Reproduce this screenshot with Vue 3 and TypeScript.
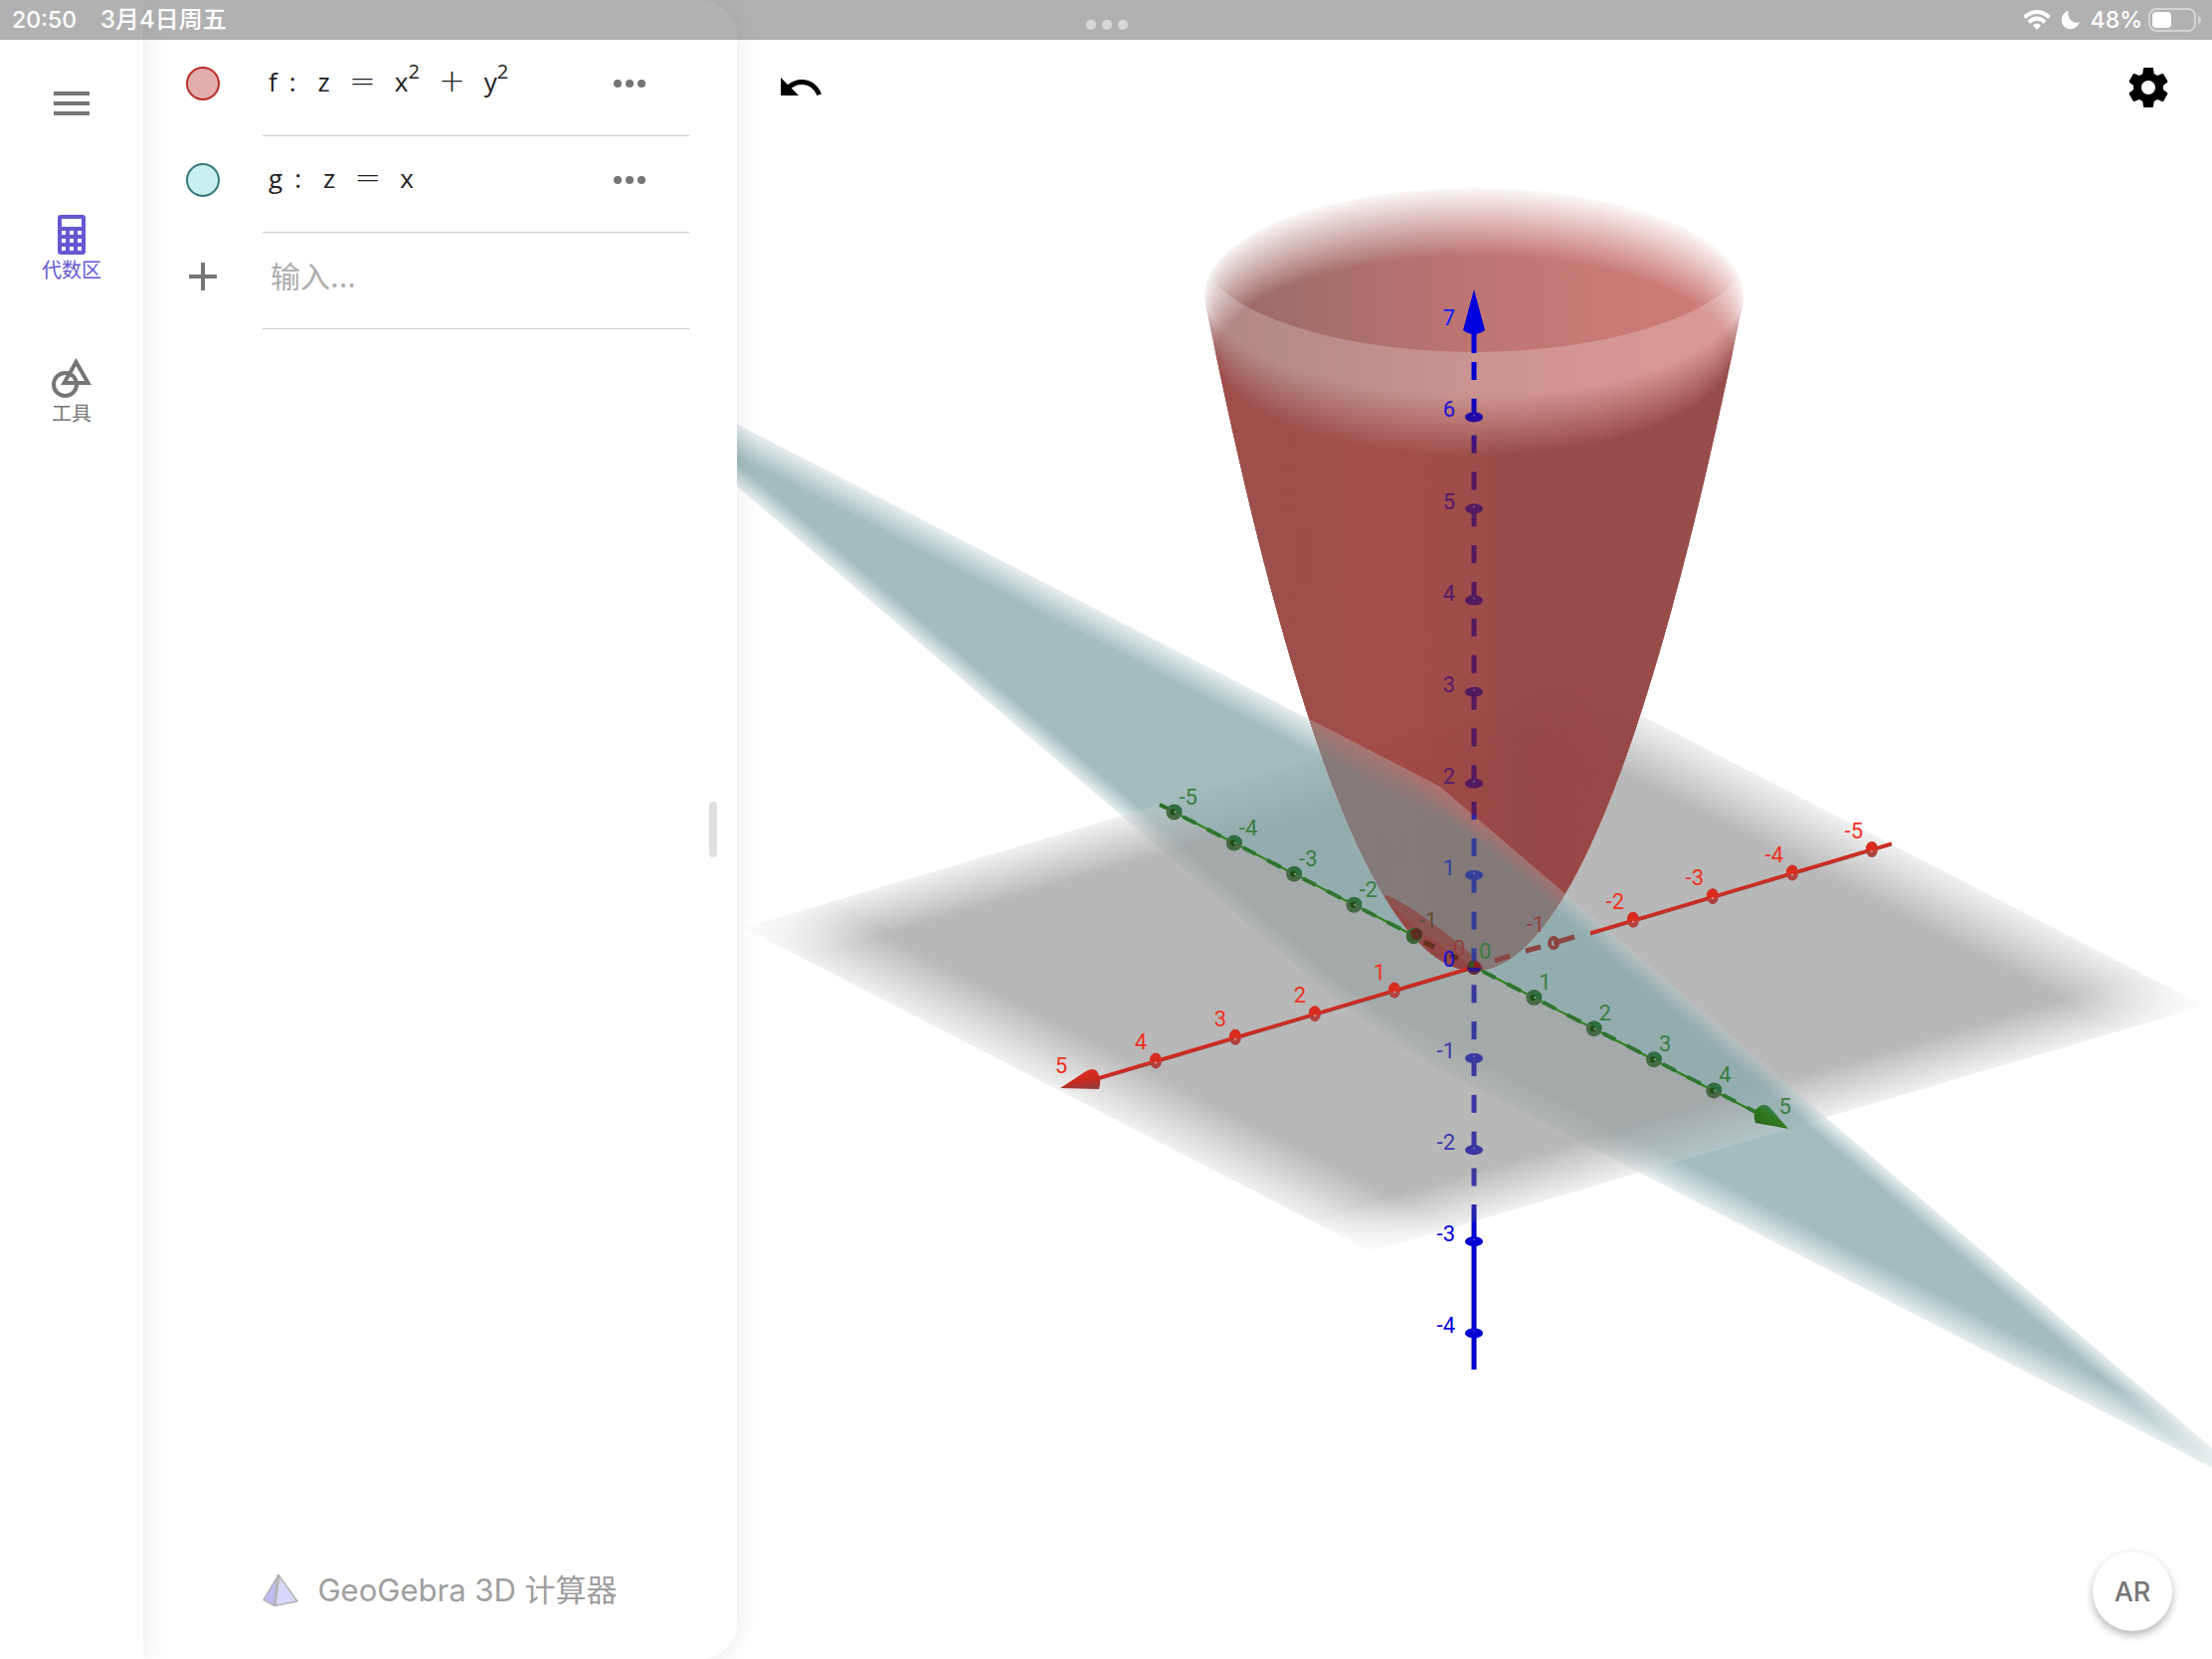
<script setup lang="ts">
type Point = [number, number]
interface Label { text: string; x: number; y: number; color: string; anchor: 'start' | 'end' }
interface Segment { a: Point; b: Point }

// Orthographic projection of the 3D scene onto the drawing area
const origin: Point = [1482, 972]
const unitX: Point = [-80, 23.6]
const unitY: Point = [60.3, 31.1]
const unitZ = 92.1

function project(x: number, y: number, z: number): Point {
  return [
    origin[0] + unitX[0] * x + unitY[0] * y,
    origin[1] + unitX[1] * x + unitY[1] * y - unitZ * z,
  ]
}

const groundMatrix = `matrix(${unitX[0]} ${unitX[1]} ${unitY[0]} ${unitY[1]} ${origin[0]} ${origin[1]})`
const slopeMatrix = `matrix(${unitX[0]} ${unitX[1] - unitZ} ${unitY[0]} ${unitY[1]} ${origin[0]} ${origin[1]})`

// Paraboloid: level curves are ellipses, the outline is a parabola
const radiusX = 100
const radiusY = 39
const curve = unitZ / (radiusX * radiusX)

function outlineY(dx: number): number {
  return origin[1] + 4 - curve * dx * dx
}
const rimHalf = 271
const rimY = outlineY(rimHalf)
const rimCenter = origin[1] - unitZ * 7.33
const bodyPath =
  `M${origin[0] - rimHalf} ${rimY} Q${origin[0]} ${rimY + 2 * curve * rimHalf * rimHalf} ${origin[0] + rimHalf} ${rimY}` +
  ` V${rimCenter} A${rimHalf} 108 0 0 0 ${origin[0] - rimHalf} ${rimCenter} Z`

function levelPath(z: number, back: boolean): string {
  const r = Math.sqrt(z)
  const cy = origin[1] - unitZ * z
  const left = origin[0] - radiusX * r
  const right = origin[0] + radiusX * r
  return `M${left - 30} ${cy} H${left} A${radiusX * r} ${radiusY * r} 0 0 ${back ? 1 : 0} ${right} ${cy} H${right + 30} V1000 H${left - 30} Z`
}

function fadeLayers(back: boolean, full: number) {
  const count = 28
  return Array.from({ length: count }, (_, i) => {
    const before = (full * i) / count
    const after = (full * (i + 1)) / count
    return {
      d: levelPath(7.38 - (0.7 * i) / (count - 1), back),
      opacity: (after - before) / (1 - before),
    }
  })
}
const backLayers = fadeLayers(true, 1)
const frontLayers = fadeLayers(false, 0.78)
const openingPath = levelPath(7.9, false)

// Circle in which the plane cuts the paraboloid
const cutPoints = Array.from({ length: 60 }, (_, i) => {
  const t = (i / 60) * Math.PI * 2
  const x = 0.5 + 0.5 * Math.cos(t)
  return project(x, 0.5 * Math.sin(t), x).join(',')
}).join(' ')
const lensPath =
  `M${origin[0] - 90} ${outlineY(-90)} Q${origin[0] - 41} ${origin[1] + 4 + curve * 90 * 8} ${origin[0] + 8} ${outlineY(8)} Z`

const zDashes: Segment[] = Array.from({ length: 23 }, (_, i) => {
  const y = 364 + i * unitZ * 0.4
  return { a: [origin[0], y], b: [origin[0], y + 18] }
})

const yDashes: Segment[] = []
for (let n = -5; n < 5; n++) {
  if (n === -1) continue
  for (const [from, to] of [[0.15, 0.36], [0.55, 0.78]]) {
    yDashes.push({ a: project(0, n + from, 0), b: project(0, n + to, 0) })
  }
}

function range(from: number, to: number): number[] {
  return Array.from({ length: to - from + 1 }, (_, i) => from + i)
}
const xTicks = range(-5, 4).filter((n) => n !== 0 && n !== -1).map((n) => project(n, 0, 0))
const yTicks = range(-5, 4).filter((n) => n !== 0).map((n) => project(0, n, 0))
const zTicks = range(-4, 6).filter((n) => n !== 0).map((n) => project(0, 0, n))

function zColor(n: number): string {
  if (n === 7) return '#0a1eff'
  if (n === 6) return '#1c14cf'
  if (n >= 2) return '#571a68'
  if (n === 1) return '#33409a'
  if (n === 0) return '#1410d8'
  return n >= -2 ? '#3838a8' : '#0000e0'
}

const labels: Label[] = [
  ...range(-5, 5).map((n): Label => {
    const [x, y] = project(n, 0, 0)
    return { text: String(n), x: x - 9, y: y - 11, color: n === -1 || n === 0 ? '#923f3c' : '#f0301f', anchor: 'end' }
  }),
  ...range(-5, 5).map((n): Label => {
    const [x, y] = project(0, n, 0)
    return { text: String(n), x: x + 5, y: y - 8, color: n === -1 ? '#5c5038' : '#3a7d42', anchor: 'start' }
  }),
  ...range(-4, 7).map((n): Label => {
    const [x, y] = project(0, 0, n)
    return { text: String(n), x: x - 19, y, color: zColor(n), anchor: 'end' }
  }),
]
</script>

<template>
  <div class="app">
    <header class="status">
      <div class="status-left"><span>20:50</span><span class="date">3月4日周五</span></div>
      <div class="status-dots"><i></i><i></i><i></i></div>
      <div class="status-right">
        <svg width="28" height="20" viewBox="0 0 28 20" fill="none" stroke="#fff" stroke-width="4">
          <path d="M1.500 7.500Q14-3.500 26.500 7.500" />
          <path d="M6 12.200Q14 5 22 12.200" />
          <path d="M9.800 15.600Q14 11.400 18.200 15.600L14 20Z" fill="#fff" stroke="none" />
        </svg>
        <svg class="moon" width="20" height="20" viewBox="0 0 20 20">
          <path d="M7.500.500C6 7.500 11 14.500 19 12.300C17 17 13.500 19.300 9.800 19.300C4.500 19.300.800 15.300.800 10.300C.800 6 3.500 2 7.500.500Z" fill="#fff" />
        </svg>
        <span>48%</span>
        <svg width="54" height="24" viewBox="0 0 54 24">
          <rect x="1" y="1" width="46" height="22" rx="7" fill="none" stroke="#d4d4d4" stroke-width="2" />
          <rect x="4" y="4" width="19" height="16" rx="4" fill="#fff" />
          <path d="M50 8Q53 9 53 12T50 16Z" fill="#d4d4d4" />
        </svg>
      </div>
    </header>

    <nav class="rail">
      <button class="menu" aria-label="菜单"><i></i><i></i><i></i></button>
      <button class="tab active">
        <svg width="28" height="40" viewBox="0 0 28 40">
          <path
            fill="currentColor" fill-rule="evenodd"
            d="M3 0H25Q28 0 28 3V37Q28 40 25 40H3Q0 40 0 37V3Q0 0 3 0ZM4 4V12H24V4ZM4 16V20H8V16ZM12 16V20H16V16ZM20 16V20H24V16ZM4 24V28H8V24ZM12 24V28H16V24ZM20 24V28H24V24ZM4 32V36H8V32ZM12 32V36H16V32ZM20 32V36H24V32Z"
          />
        </svg>
        <span>代数区</span>
      </button>
      <button class="tab">
        <svg width="40" height="40" viewBox="0 0 40 40" fill="none" stroke="currentColor" stroke-width="4">
          <circle cx="13.500" cy="26.500" r="11.500" />
          <path d="M24.500 4L36.500 25H12.500Z" />
        </svg>
        <span>工具</span>
      </button>
    </nav>

    <section class="algebra">
      <div class="rows">
        <div class="row">
          <button class="marble red" aria-label="f"></button>
          <div class="cell">
            <div class="formula">
              <span class="name">f</span><span class="colon">:</span><span>z</span><span class="op">=</span><span>x<sup>2</sup></span><span class="op">+</span><span>y<sup>2</sup></span>
            </div>
            <button class="more" aria-label="更多"><i></i><i></i><i></i></button>
          </div>
        </div>
        <div class="row">
          <button class="marble teal" aria-label="g"></button>
          <div class="cell">
            <div class="formula">
              <span class="name">g</span><span class="colon">:</span><span>z</span><span class="op">=</span><span>x</span>
            </div>
            <button class="more" aria-label="更多"><i></i><i></i><i></i></button>
          </div>
        </div>
        <div class="row">
          <button class="plus" aria-label="添加">
            <svg width="28" height="28" viewBox="0 0 28 28"><path d="M12 0H16V12H28V16H16V28H12V16H0V12H12Z" fill="#757575" /></svg>
          </button>
          <div class="cell">
            <input class="entry" type="text" placeholder="输入..." aria-label="输入" />
          </div>
        </div>
      </div>
      <div class="sash"></div>
      <footer class="brand">
        <svg width="37" height="34" viewBox="0 0 37 34" stroke="#b4b4b4" stroke-width="1.500" stroke-linejoin="round">
          <path d="M16 1.500L1 26.500L12 32.500Z" fill="#bcbcf6" />
          <path d="M16 1.500L12 32.500L35 28Z" fill="#d8d8fa" />
          <path d="M16 1.500L12 32.500" stroke-width="3" />
        </svg>
        <span>GeoGebra 3D 计算器</span>
      </footer>
    </section>

    <main class="stage">
      <svg class="scene" viewBox="741 0 1483 1668" preserveAspectRatio="xMidYMid slice">
        <defs>
          <linearGradient id="fade-ground-u">
            <stop offset="0" stop-color="#fff" stop-opacity="0.2" /><stop offset="0.1" stop-color="#fff" />
            <stop offset="0.9" stop-color="#fff" /><stop offset="1" stop-color="#fff" stop-opacity="0.2" />
          </linearGradient>
          <linearGradient id="fade-ground-v" x2="0" y2="1">
            <stop offset="0" stop-color="#fff" stop-opacity="0.2" /><stop offset="0.1" stop-color="#fff" />
            <stop offset="0.9" stop-color="#fff" /><stop offset="1" stop-color="#fff" stop-opacity="0.2" />
          </linearGradient>
          <linearGradient id="fade-slope-u">
            <stop offset="0" stop-color="#fff" stop-opacity="0.25" /><stop offset="0.115" stop-color="#fff" />
            <stop offset="0.885" stop-color="#fff" /><stop offset="1" stop-color="#fff" stop-opacity="0.25" />
          </linearGradient>
          <linearGradient id="fade-slope-v" x2="0" y2="1">
            <stop offset="0" stop-color="#fff" stop-opacity="0.25" /><stop offset="0.08" stop-color="#fff" />
            <stop offset="0.92" stop-color="#fff" /><stop offset="1" stop-color="#fff" stop-opacity="0.25" />
          </linearGradient>
          <mask id="ground-u" maskUnits="userSpaceOnUse" x="-6" y="-6" width="12" height="12">
            <rect x="-5.240" y="-5.240" width="10.480" height="10.480" fill="url(#fade-ground-u)" />
          </mask>
          <mask id="ground-v" maskUnits="userSpaceOnUse" x="-6" y="-6" width="12" height="12">
            <rect x="-5.240" y="-5.240" width="10.480" height="10.480" fill="url(#fade-ground-v)" />
          </mask>
          <mask id="slope-u" maskUnits="userSpaceOnUse" x="-8" y="-8" width="16" height="16">
            <rect x="-4.450" y="-7.400" width="10.460" height="14.800" fill="url(#fade-slope-u)" />
          </mask>
          <mask id="slope-v" maskUnits="userSpaceOnUse" x="-8" y="-8" width="16" height="16">
            <rect x="-4.450" y="-7.400" width="10.460" height="14.800" fill="url(#fade-slope-v)" />
          </mask>
          <g id="ground" :transform="groundMatrix">
            <rect x="-5.240" y="-5.240" width="10.480" height="10.480" fill="#fff" fill-opacity="0.22" />
            <g mask="url(#ground-u)">
              <rect mask="url(#ground-v)" x="-5.240" y="-5.240" width="10.480" height="10.480" fill="#9c9c9c" fill-opacity="0.718" />
            </g>
          </g>
          <g id="slope" :transform="slopeMatrix">
            <rect x="-4.450" y="-7.400" width="10.460" height="14.800" fill="#fff" fill-opacity="0.22" />
            <g mask="url(#slope-u)">
              <rect mask="url(#slope-v)" x="-4.450" y="-7.400" width="10.460" height="14.800" fill="currentColor" fill-opacity="0.718" />
            </g>
          </g>
          <clipPath id="above"><path d="M741 590L2224 1355V0H741Z" /></clipPath>
          <clipPath id="below"><path d="M741 590L2224 1355V1668H741Z" /></clipPath>
          <clipPath id="body"><path :d="bodyPath" /></clipPath>
          <linearGradient id="inside" gradientUnits="userSpaceOnUse" x1="1212" y1="0" x2="1752" y2="0">
            <stop offset="0" stop-color="#9c6664" /><stop offset="0.15" stop-color="#a26c6a" />
            <stop offset="0.5" stop-color="#be7573" /><stop offset="0.85" stop-color="#cd7b77" />
            <stop offset="1" stop-color="#cd7b77" />
          </linearGradient>
          <linearGradient id="outside" gradientUnits="userSpaceOnUse" x1="1212" y1="0" x2="1752" y2="0">
            <stop offset="0" stop-color="#9b3b38" /><stop offset="0.3" stop-color="#983a37" />
            <stop offset="0.5" stop-color="#923936" /><stop offset="0.62" stop-color="#873735" />
            <stop offset="1" stop-color="#823937" />
          </linearGradient>
          <linearGradient id="z-ink" gradientUnits="userSpaceOnUse" x1="0" y1="291" x2="0" y2="1377">
            <stop offset="0" stop-color="#0000e4" /><stop offset="0.095" stop-color="#0000cc" />
            <stop offset="0.120" stop-color="#2408a4" /><stop offset="0.153" stop-color="#4c1868" />
            <stop offset="0.180" stop-color="#531a60" /><stop offset="0.486" stop-color="#531a60" />
            <stop offset="0.487" stop-color="#2a20a8" /><stop offset="0.497" stop-color="#343f98" />
            <stop offset="0.625" stop-color="#343f98" /><stop offset="0.635" stop-color="#3838a0" />
            <stop offset="0.835" stop-color="#3838a0" /><stop offset="0.862" stop-color="#1a1ab4" />
            <stop offset="0.864" stop-color="#0000d2" /><stop offset="1" stop-color="#0000d2" />
          </linearGradient>
          <linearGradient id="cone-red" x2="0.300" y2="1">
            <stop offset="0.200" stop-color="#de2b1e" /><stop offset="0.700" stop-color="#c82a20" /><stop offset="1" stop-color="#9c3834" />
          </linearGradient>
          <linearGradient id="cone-green" x1="1" y1="0" x2="0.300" y2="0.800">
            <stop offset="0.450" stop-color="#3c7a4a" /><stop offset="0.650" stop-color="#2f7a20" /><stop offset="1" stop-color="#2c6a1c" />
          </linearGradient>
        </defs>

        <use href="#ground" clip-path="url(#above)" />
        <use href="#slope" color="#7fa3a4" />
        <use href="#ground" clip-path="url(#below)" />

        <g clip-path="url(#body)">
          <path v-for="(l, i) in backLayers" :key="'b' + i" :d="l.d" fill="url(#inside)" :fill-opacity="l.opacity" />
          <path :d="openingPath" fill="#fff" fill-opacity="0.22" />
          <path v-for="(l, i) in frontLayers" :key="'f' + i" :d="l.d" fill="url(#outside)" :fill-opacity="l.opacity" />
          <g :transform="groundMatrix">
            <g mask="url(#ground-u)">
              <rect mask="url(#ground-v)" x="-5.240" y="-5.240" width="10.480" height="10.480" fill="#600" fill-opacity="0.040" />
            </g>
          </g>
          <use href="#slope" color="#717d7d" />
        </g>
        <path :d="lensPath" fill="#934745" />
        <polygon :points="cutPoints" fill="#8c5351" />

        <g fill="none">
          <g stroke="#8a4543" stroke-width="5">
            <path d="M1503 966L1518 961M1534 956L1549 952M1562 948L1583 942" />
            <ellipse cx="1562" cy="948" rx="4" ry="5" stroke-width="4" />
          </g>
          <path d="M1599 938L1902 848" stroke="#cf2a1e" stroke-width="3" />
          <path d="M1599 940L1902 850" stroke="#a8231b" stroke-width="1" />
          <path d="M1482 972L1100 1085" stroke="#cf2a1e" stroke-width="3" />
          <path d="M1482 974L1100 1087" stroke="#a8231b" stroke-width="1" />
          <path d="M1432 947L1442 952M1458 960L1466 964" stroke="#63301f" stroke-width="5" />
          <path d="M1166 809L1422 941M1482 972L1768 1120" stroke="#2f7f1c" stroke-width="2" />
          <path d="M1166 809L1178 815" stroke="#2c6d24" stroke-width="4" />
          <path v-for="(s, i) in yDashes" :key="'y' + i" :d="`M${s.a} L${s.b}`" stroke="#2f7430" stroke-width="4" />
        </g>

        <g v-for="(t, i) in xTicks" :key="'xt' + i">
          <ellipse :cx="t[0]" :cy="t[1]" rx="6" ry="8" fill="#b04340" />
          <path :d="`M${t[0] - 6} ${t[1] + 2}V${t[1] - 3}Q${t[0] - 2} ${t[1] - 10} ${t[0] + 4} ${t[1] - 6}L${t[0] + 6} ${t[1] + 1}Z`" fill="#d92c1e" />
          <circle :cx="t[0]" :cy="t[1] + 2" r="1" fill="#f0a098" />
        </g>
        <g v-for="(t, i) in yTicks" :key="'yt' + i">
          <circle :cx="t[0]" :cy="t[1]" r="8" fill="#486a46" />
          <path :d="`M${t[0] - 6} ${t[1] - 5}Q${t[0] + 2} ${t[1] - 11} ${t[0] + 8} ${t[1] - 3}L${t[0] + 7} ${t[1] + 3}Z`" fill="#2f6e42" />
          <circle :cx="t[0] - 1" :cy="t[1]" r="3" fill="#1f4f10" />
          <circle :cx="t[0] + 1" :cy="t[1]" r="1" fill="#8fb8a0" />
        </g>
        <circle cx="1421" cy="942" r="7" fill="#3c6430" />
        <circle cx="1424" cy="939" r="6" fill="#5c3020" />

        <path d="M1066 1094L1092 1077Q1099 1073 1103 1077Q1108 1085 1105 1095Z" fill="url(#cone-red)" />
        <path d="M1798 1135L1780 1114Q1774 1108 1768 1113Q1761 1118 1765 1129Z" fill="url(#cone-green)" />

        <g fill="none" stroke="url(#z-ink)" stroke-width="5">
          <path d="M1482 333V355" />
          <path v-for="(s, i) in zDashes" :key="'z' + i" :d="`M${s.a} L${s.b}`" />
          <path d="M1482 1211V1377" />
        </g>
        <path d="M1482 291L1493 332Q1482 340 1471 332Z" fill="#0000de" />
        <g v-for="(t, i) in zTicks" :key="'zt' + i">
          <ellipse :cx="t[0]" :cy="t[1]" rx="9" ry="5" fill="url(#z-ink)" />
          <circle :cx="t[0]" :cy="t[1] - 2" r="1" fill="#fff" fill-opacity="0.300" />
        </g>
        <circle cx="1482" cy="973" r="7" fill="#5c2a34" />
        <path d="M1477 967L1482 966V972L1477 973Z" fill="#37501c" />
        <path d="M1482 966Q1488 967 1489 973H1482Z" fill="#8c2024" />
        <path d="M1475 973H1490L1486 977H1478Z" fill="#2c1a8c" />

        <text
          v-for="(l, i) in labels" :key="'t' + i" class="label"
          :x="l.x" :y="l.y" :fill="l.color" :text-anchor="l.anchor"
        >{{ l.text }}</text>
      </svg>

      <div class="tools">
        <button aria-label="撤销">
          <svg width="48" height="48" viewBox="0 0 24 24"><path d="M12.5 8c-2.65 0-5.05.99-6.9 2.6L2 7v9h9l-3.62-3.62c1.39-1.16 3.16-1.88 5.12-1.88 3.54 0 6.55 2.31 7.6 5.5l2.37-.78C21.08 11.03 17.15 8 12.5 8z" /></svg>
        </button>
        <button aria-label="设置">
          <svg width="48" height="48" viewBox="0 0 24 24"><path d="M19.43 12.98c.04-.32.07-.64.07-.98s-.03-.66-.07-.98l2.11-1.65c.19-.15.24-.42.12-.64l-2-3.46c-.12-.22-.39-.3-.61-.22l-2.49 1c-.52-.4-1.08-.73-1.69-.98l-.38-2.65C14.46 2.18 14.25 2 14 2h-4c-.25 0-.46.18-.49.42l-.38 2.65c-.61.25-1.17.59-1.69.98l-2.49-1c-.23-.09-.49 0-.61.22l-2 3.46c-.13.22-.07.49.12.64l2.11 1.65c-.04.32-.07.65-.07.98s.03.66.07.98l-2.11 1.65c-.19.15-.24.42-.12.64l2 3.46c.12.22.39.3.61.22l2.49-1c.52.4 1.08.73 1.69.98l.38 2.65c.03.24.24.42.49.42h4c.25 0 .46-.18.49-.42l.38-2.65c.61-.25 1.17-.59 1.69-.98l2.49 1c.23.09.49 0 .61-.22l2-3.46c.12-.22.07-.49-.12-.64l-2.11-1.65zM12 15.5c-1.93 0-3.5-1.57-3.5-3.5s1.57-3.5 3.5-3.5 3.5 1.57 3.5 3.5-1.57 3.5-3.5 3.5z" /></svg>
        </button>
      </div>
      <button class="ar">AR</button>
    </main>
  </div>
</template>

<style>
body {
  background: #fff;
}
</style>

<style scoped>
.app {
  position: relative;
  display: grid;
  grid-template-columns: 144px minmax(440px, 597fr) 1483fr;
  height: 100vh;
  overflow: hidden;
  background: #fff;
  font-family: Inter, "Noto Sans CJK SC", sans-serif;
}
button {
  display: flex;
  padding: 0;
  border: 0;
  background: none;
  font: inherit;
  color: inherit;
}
svg {
  display: block;
}

.status {
  position: absolute;
  inset: 0 0 auto 0;
  z-index: 3;
  display: grid;
  grid-template-columns: 1fr auto 1fr;
  align-items: center;
  height: 40px;
  padding: 0 10px 0 12px;
  box-sizing: border-box;
  background: rgba(0, 0, 0, 0.305);
  color: #fff;
  font-size: 23px;
  font-weight: 500;
  line-height: 24px;
}
.status-left {
  display: flex;
  align-items: baseline;
  gap: 24px;
}
.date {
  font-size: 24px;
}
.status-dots {
  display: flex;
  gap: 6px;
  padding-top: 10px;
}
.status-dots i {
  width: 10px;
  height: 10px;
  border-radius: 50%;
  background: #d8d8d8;
}
.status-right {
  display: flex;
  justify-content: flex-end;
  align-items: center;
  gap: 6px;
}
.moon {
  margin: 0 4px;
}

.rail {
  z-index: 2;
  display: flex;
  flex-direction: column;
  align-items: center;
  padding-top: 92px;
  background: #fff;
  box-shadow: 0 0 32px rgba(0, 0, 0, 0.09);
}
.menu {
  flex-direction: column;
  gap: 6px;
  width: 36px;
  margin-bottom: 100px;
}
.menu i {
  height: 4px;
  background: #757575;
}
.tab {
  flex-direction: column;
  align-items: center;
  height: 144px;
  color: #757575;
  font-size: 20px;
  line-height: 32px;
}
.tab.active {
  color: #6557d2;
}

.algebra {
  z-index: 1;
  position: relative;
  display: flex;
  flex-direction: column;
  justify-content: space-between;
  padding-top: 40px;
  background: #fff;
  border-radius: 0 36px 36px 0;
  box-shadow: 0 0 24px rgba(0, 0, 0, 0.09);
}
.row {
  display: grid;
  grid-template-columns: 120px 1fr;
  align-items: stretch;
  height: 97px;
  margin-right: 48px;
}
.marble,
.plus {
  align-self: center;
  justify-self: center;
  margin-bottom: 10px;
}
.marble {
  width: 34px;
  height: 34px;
  border: 2px solid;
  border-radius: 50%;
}
.red {
  border-color: #b8302a;
  background: #e3adae;
}
.teal {
  border-color: #35797b;
  background: #c9f0ef;
}
.cell {
  display: flex;
  align-items: center;
  justify-content: space-between;
  padding: 0 44px 8px 6px;
  border-bottom: 1px solid #ccc;
}
.formula {
  display: flex;
  align-items: baseline;
  margin-bottom: 6px;
  color: #212121;
  font-family: "Open Sans", "Noto Sans", sans-serif;
  font-size: 26px;
  line-height: 40px;
}
.colon {
  margin: 0 22px 0 12px;
}
.op {
  width: 65px;
  text-align: center;
  font-family: "DejaVu Sans Light", "DejaVu Sans", sans-serif;
  font-size: 32px;
  font-weight: 200;
}
sup {
  font-size: 20px;
  line-height: 0;
  vertical-align: 13px;
}
.more {
  gap: 4px;
}
.more i {
  width: 8px;
  height: 8px;
  border-radius: 50%;
  background: #757575;
}
.entry {
  width: 100%;
  padding: 0 0 0 2px;
  border: 0;
  outline: 0;
  background: none;
  color: #212121;
  font: 400 30px Inter, "Noto Sans CJK SC", sans-serif;
}
.entry::placeholder {
  color: #acacac;
  opacity: 1;
}
.sash {
  position: absolute;
  top: 50%;
  right: 20px;
  width: 8px;
  height: 56px;
  border-radius: 4px;
  background: #e0e0e0;
  transform: translateY(-50%);
}
.brand {
  display: flex;
  align-items: center;
  justify-content: center;
  gap: 18px;
  height: 138px;
  color: #9e9e9e;
  font-size: 31px;
  line-height: 40px;
}

.stage {
  position: relative;
  min-width: 0;
}
.scene {
  width: 100%;
  height: 100vh;
}
.label {
  font-family: Roboto, sans-serif;
  font-size: 22px;
}
.tools {
  position: absolute;
  inset: 64px 40px auto 40px;
  display: flex;
  justify-content: space-between;
}
.ar {
  position: absolute;
  right: 40px;
  bottom: 28px;
  align-items: center;
  justify-content: center;
  width: 80px;
  height: 80px;
  border-radius: 50%;
  background: #fff;
  box-shadow: 0 4px 8px rgba(0, 0, 0, 0.3);
  color: #757575;
  font-size: 27px;
  font-weight: 500;
}
</style>
